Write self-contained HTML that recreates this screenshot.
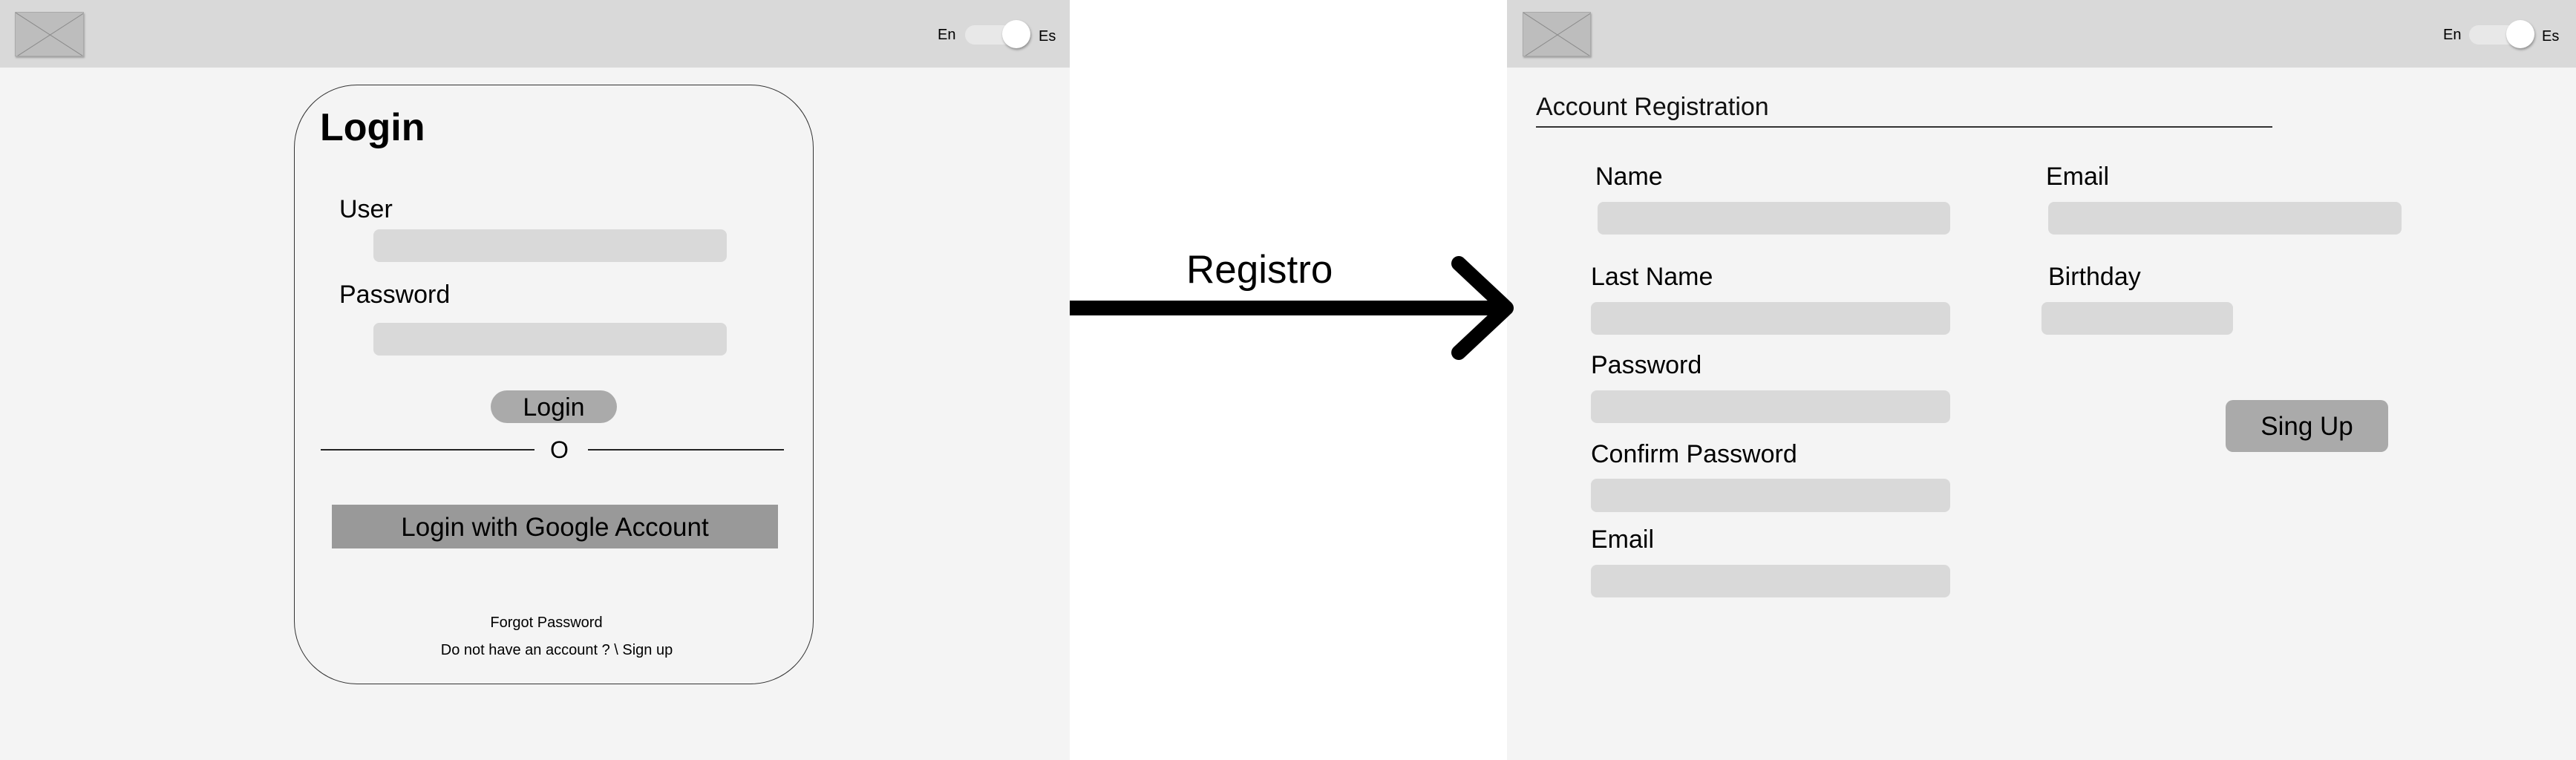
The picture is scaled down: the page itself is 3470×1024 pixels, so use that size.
<!DOCTYPE html>
<html><head><meta charset="utf-8"><style>
*{margin:0;padding:0;box-sizing:border-box}
body{width:3470px;height:1024px;background:#fff;position:relative;overflow:hidden;font-family:"Liberation Sans",sans-serif;color:#000}
.a{position:absolute}
.panel{background:#f4f4f4;top:0;height:1024px}
.hdr{background:#d9d9d9;top:0;height:91px}
.logo{background:#bdbdbd;border:1px solid #aaa;box-shadow:1px 2px 2px rgba(0,0,0,.25)}
.inp{background:#d9d9d9;border-radius:8px}
.lbl{font-size:34px;line-height:40px;white-space:nowrap}
.track{background:#e8e8e8;border-radius:13px;height:26px}
.knob{background:#fff;border-radius:50%;width:38px;height:38px;box-shadow:1px 2px 3px rgba(0,0,0,.35)}
.sm{font-size:20px}
</style></head><body>
<div class="a panel" style="left:0;width:1441px"></div>
<div class="a hdr" style="left:0;width:1441px"></div>
<svg class="a logo" style="left:20px;top:16px" width="93" height="60"><line x1="0" y1="0" x2="93" y2="60" stroke="#8a8a8a"/><line x1="93" y1="0" x2="0" y2="60" stroke="#8a8a8a"/></svg>
<div class="a sm" style="left:1263px;top:36px">En</div>
<div class="a track" style="left:1300px;top:34px;width:88px"></div>
<div class="a knob" style="left:1350px;top:27px"></div>
<div class="a sm" style="left:1399px;top:38px">Es</div>

<div class="a" style="left:396px;top:114px;width:700px;height:808px;border:1.5px solid #333;border-radius:85px"></div>
<div class="a" style="left:431px;top:142px;font-size:52px;font-weight:bold">Login</div>
<div class="a lbl" style="left:457px;top:262px">User</div>
<div class="a inp" style="left:503px;top:309px;width:476px;height:44px"></div>
<div class="a lbl" style="left:457px;top:377px">Password</div>
<div class="a inp" style="left:503px;top:435px;width:476px;height:44px"></div>
<div class="a" style="left:661px;top:526px;width:170px;height:44px;background:#aaa;border-radius:22px;font-size:34px;line-height:46px;text-align:center">Login</div>
<div class="a" style="left:432px;top:605px;width:288px;height:1.5px;background:#222"></div>
<div class="a" style="left:792px;top:605px;width:264px;height:1.5px;background:#222"></div>
<div class="a" style="left:741px;top:588px;font-size:32px;line-height:36px">O</div>
<div class="a" style="left:447px;top:680px;width:601px;height:59px;background:#999;font-size:35px;line-height:61px;text-align:center">Login with Google Account</div>
<div class="a sm" style="left:546px;top:828px;width:380px;text-align:center">Forgot Password</div>
<div class="a sm" style="left:500px;top:865px;width:500px;text-align:center">Do not have an account ? \ Sign up</div>

<div class="a" style="left:1598px;top:334px;font-size:53px;line-height:60px">Registro</div>

<div class="a panel" style="left:2030px;width:1440px"></div>
<div class="a hdr" style="left:2030px;width:1440px"></div>
<svg class="a logo" style="left:2051px;top:16px" width="92" height="60"><line x1="0" y1="0" x2="92" y2="60" stroke="#8a8a8a"/><line x1="92" y1="0" x2="0" y2="60" stroke="#8a8a8a"/></svg>
<div class="a sm" style="left:3291px;top:36px">En</div>
<div class="a track" style="left:3326px;top:34px;width:89px"></div>
<div class="a knob" style="left:3376px;top:27px"></div>
<div class="a sm" style="left:3424px;top:38px">Es</div>

<div class="a" style="left:2069px;top:124px;font-size:34px;line-height:40px;color:#111">Account Registration</div>
<div class="a" style="left:2069px;top:170px;width:992px;height:1.5px;background:#333"></div>

<div class="a lbl" style="left:2149px;top:218px">Name</div>
<div class="a inp" style="left:2152px;top:272px;width:475px;height:44px"></div>
<div class="a lbl" style="left:2756px;top:218px">Email</div>
<div class="a inp" style="left:2759px;top:272px;width:476px;height:44px"></div>
<div class="a lbl" style="left:2143px;top:353px">Last Name</div>
<div class="a inp" style="left:2143px;top:407px;width:484px;height:44px"></div>
<div class="a lbl" style="left:2759px;top:353px">Birthday</div>
<div class="a inp" style="left:2750px;top:407px;width:258px;height:44px"></div>
<div class="a lbl" style="left:2143px;top:472px">Password</div>
<div class="a inp" style="left:2143px;top:526px;width:484px;height:44px"></div>
<div class="a lbl" style="left:2143px;top:592px">Confirm Password</div>
<div class="a inp" style="left:2143px;top:645px;width:484px;height:45px"></div>
<div class="a lbl" style="left:2143px;top:707px">Email</div>
<div class="a inp" style="left:2143px;top:761px;width:484px;height:44px"></div>
<div class="a" style="left:2998px;top:539px;width:219px;height:70px;background:#aaa;border-radius:10px;font-size:35px;line-height:72px;text-align:center">Sing Up</div>

<svg class="a" style="left:1441px;top:340px" width="610" height="150">
<line x1="0" y1="75" x2="580" y2="75" stroke="#000" stroke-width="20"/>
<polyline points="524,15 588,75 524,135" fill="none" stroke="#000" stroke-width="20" stroke-linecap="round" stroke-linejoin="round"/>
</svg>
</body></html>
